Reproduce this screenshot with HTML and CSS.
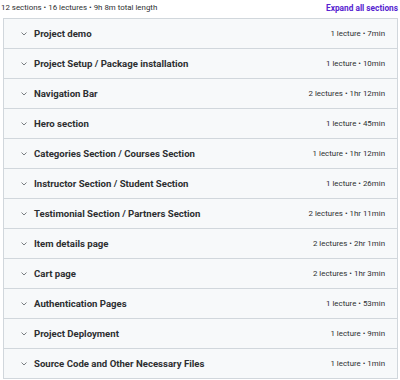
FILE: index.html
```html
<!DOCTYPE html>
<html>
<head>
  <meta charset='utf-8'>
  <title>Course content</title>
  <link rel="stylesheet" href="styles.css">
</head>
<body>
  <div class='summary'>
    <span>12 sections • 16 lectures • 9h 8m total length</span>
    <button class='expand'>Expand all sections</button>
  </div>
  <div class='sections' id='sections'></div>
  <script>
const sections = [
  ['Project demo', '1 lecture • 7min'],
  ['Project Setup / Package installation', '1 lecture • 10min'],
  ['Navigation Bar', '2 lectures • 1hr 12min'],
  ['Hero section', '1 lecture • 45min'],
  ['Categories Section / Courses Section', '1 lecture • 1hr 12min'],
  ['Instructor Section / Student Section', '1 lecture • 26min'],
  ['Testimonial Section / Partners Section', '2 lectures • 1hr 11min'],
  ['Item details page', '2 lectures • 2hr 1min'],
  ['Cart page', '2 lectures • 1hr 3min'],
  ['Authentication Pages', '1 lecture • 53min'],
  ['Project Deployment', '1 lecture • 9min'],
  ['Source Code and Other Necessary Files', '1 lecture • 1min']
]

const list = document.getElementById('sections')

for (const [title, length] of sections) {
  const row = document.createElement('div')
  row.className = 'section'
  row.innerHTML = `
    <svg class='chevron' width='6' height='4' viewBox='0 0 6 4'><path d='M0.5 0.5 L3 3 L5.5 0.5' fill='none' stroke='#6a6f73' stroke-width='0.9'/></svg>
    <span class='title'></span>
    <span class='length'></span>`
  row.querySelector('.title').textContent = title
  row.querySelector('.length').textContent = length
  list.appendChild(row)
}
  </script>
</body>
</html>
```

FILE: styles.css
```css
* {box-sizing: border-box;}

body {
  margin: 0;
  padding: 0 2px 0 1px;
  background-color: white;
  font-family: Roboto, "Liberation Sans", sans-serif;
  color: #2d2f31;
}

.summary {
  display: flex;
  justify-content: space-between;
  align-items: center;
  height: 18px;
  font-size: 7.9px;
  color: #2d2f31;
  padding-bottom: 3px;
}

.expand {
  background: none;
  border: 0;
  padding: 0;
  font: bold 8.3px Roboto, "Liberation Sans", sans-serif;
  color: #5624d0;
}

.sections {
  margin-left: 2px;
  border: 1px solid #d1d7dc;
  border-bottom: 0;
}

.section {
  display: flex;
  align-items: center;
  height: 30px;
  padding: 0 12px 0 17px;
  background-color: #f7f9fa;
  border-bottom: 1px solid #d1d7dc;
}

.chevron {
  margin-right: 7px;
}

.title {
  flex: 1;
  font-size: 9.6px;
  font-weight: bold;
}

.length {
  font-size: 7.9px;
}
```
